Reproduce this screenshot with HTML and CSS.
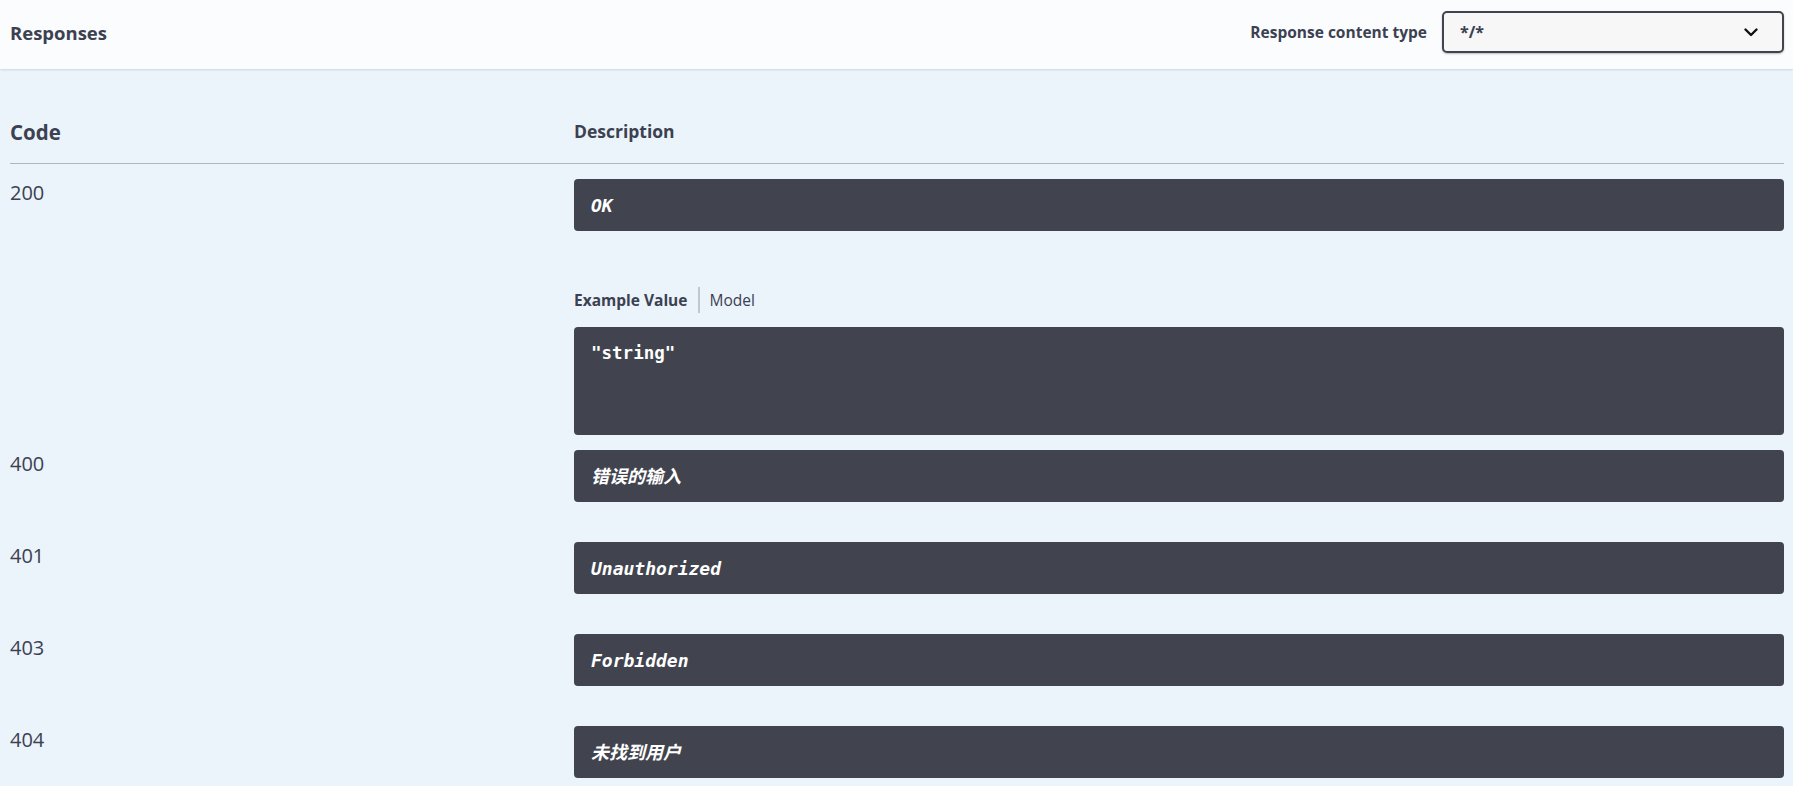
FILE: index.html
```html
<!DOCTYPE html>
<html lang="zh-CN">
<head>
<meta charset="utf-8">
<title>Responses</title>
<link rel="stylesheet" href="styles.css">
</head>
<body>
<div class="responses">
  <div class="section-header">
    <h4 class="title">Responses</h4>
    <div class="content-type">
      <span class="ct-label">Response content type</span>
      <div class="select">
        <span class="select-value">*/*</span>
        <svg class="chevron" width="14" height="9" viewBox="0 0 14 9"><path d="M1.5 1.5 L7 7 L12.5 1.5" fill="none" stroke="#111" stroke-width="2.4" stroke-linecap="round" stroke-linejoin="round"/></svg>
      </div>
    </div>
  </div>

  <div class="table">
    <div class="thead">
      <div class="th th-code">Code</div>
      <div class="th th-desc">Description</div>
    </div>

    <div class="row">
      <div class="status">200</div>
      <div class="desc">
        <div class="markdown">OK</div>
        <div class="example">
          <ul class="tabs">
            <li class="tab active">Example Value</li>
            <li class="tab">Model</li>
          </ul>
          <pre class="code">"string"</pre>
        </div>
      </div>
    </div>

    <div class="row">
      <div class="status">400</div>
      <div class="desc"><div class="markdown">错误的输入</div></div>
    </div>

    <div class="row">
      <div class="status">401</div>
      <div class="desc"><div class="markdown">Unauthorized</div></div>
    </div>

    <div class="row">
      <div class="status">403</div>
      <div class="desc"><div class="markdown">Forbidden</div></div>
    </div>

    <div class="row">
      <div class="status">404</div>
      <div class="desc"><div class="markdown">未找到用户</div></div>
    </div>
  </div>
</div>
</body>
</html>
```

FILE: styles.css
```css
* { box-sizing: border-box; }

html, body {
  margin: 0;
  padding: 0;
}

body {
  background: #ebf3fb;
  color: #3b4151;
  font-family: "Open Sans", "Noto Sans", "Noto Sans CJK SC", sans-serif;
}

.section-header {
  height: 69px;
  padding: 0 9px 5px 10px;
  display: flex;
  align-items: center;
  justify-content: space-between;
  background: #fbfcfe;
  box-shadow: 0 1px 2px rgba(0, 0, 0, 0.12);
}

.title {
  margin: 0;
  font-size: 18.5px;
  font-weight: 700;
  color: #3b4151;
}

.content-type {
  display: flex;
  align-items: center;
  gap: 15px;
}

.ct-label {
  font-size: 15.5px;
  font-weight: 700;
  color: #3b4151;
}

.select {
  width: 342px;
  height: 42px;
  border: 2px solid #41444e;
  border-radius: 5px;
  background: #f7f7f7;
  box-shadow: 0 1px 2px rgba(0, 0, 0, 0.25);
  display: flex;
  align-items: center;
  justify-content: space-between;
  padding: 0 24px 0 16px;
}

.select-value {
  font-size: 16px;
  font-weight: 700;
  color: #3b4151;
}

.chevron { display: block; margin-top: 1px; }

.table {
  padding: 0 9px 0 10px;
}

.thead {
  display: grid;
  grid-template-columns: 564px 1fr;
  padding-top: 49px;
  padding-bottom: 17px;
  border-bottom: 1px solid rgba(59, 65, 81, 0.35);
}

.th { font-weight: 700; color: #3b4151; }
.th-code { font-size: 20.5px; }
.th-desc { font-size: 17.5px; padding-top: 1px; }

.row {
  display: grid;
  grid-template-columns: 564px 1fr;
  padding-top: 15px;
}

.status {
  font-size: 20px;
  color: #3b4151;
}

.markdown {
  background: #41444e;
  color: #fff;
  border-radius: 4px;
  padding: 17px 17px 15px;
  font-family: "DejaVu Sans Mono", "Noto Sans CJK SC", monospace;
  font-size: 18px;
  line-height: 20px;
  font-weight: 700;
  font-style: italic;
  margin-bottom: 25px;
}

.example { margin-top: 56px; }

.tabs {
  list-style: none;
  margin: 0 0 14px;
  padding: 0;
  display: flex;
  height: 26px;
}

.tab {
  font-size: 15.5px;
  line-height: 26px;
  color: #3b4151;
}

.tab.active {
  font-weight: 700;
  padding-right: 11px;
  border-right: 2px solid #c3c7ce;
}

.tab + .tab { padding-left: 9px; }

.code {
  margin: 0;
  height: 108px;
  background: #41444e;
  color: #fff;
  border-radius: 4px;
  padding: 14px 17px;
  font-family: "DejaVu Sans Mono", monospace;
  font-size: 17.5px;
  line-height: 24px;
  font-weight: 700;
}
```
